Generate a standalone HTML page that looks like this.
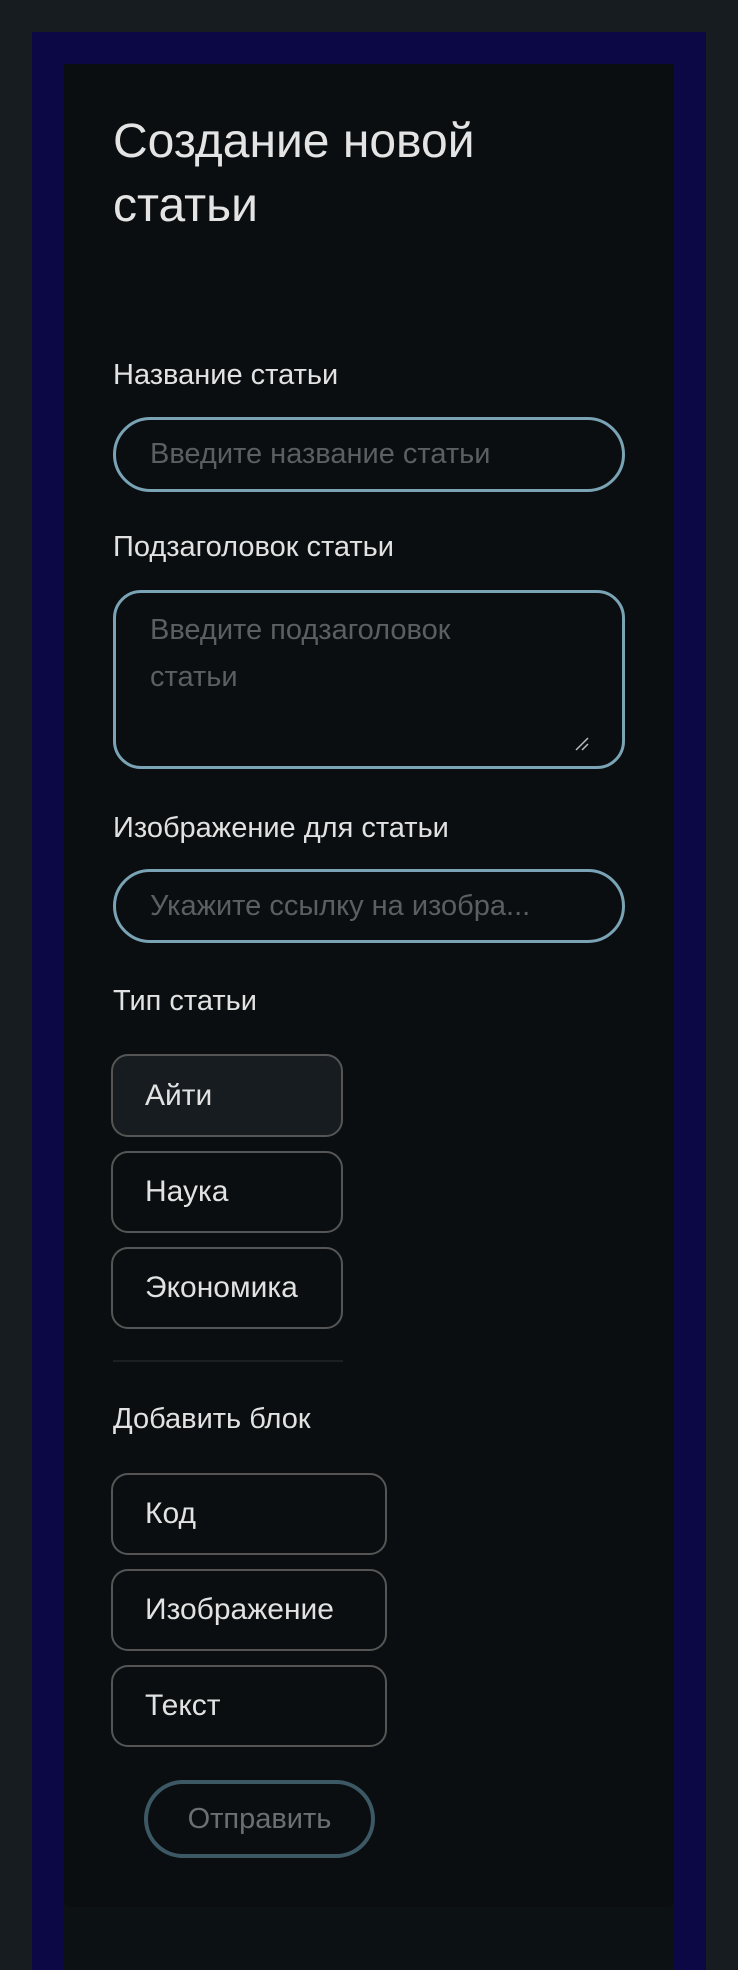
<!DOCTYPE html>
<html><head><meta charset="utf-8"><style>
*{box-sizing:border-box;margin:0;padding:0}
body{width:738px;height:1970px;background:#161c1f;font-family:"Liberation Sans",sans-serif;position:relative;overflow:hidden;color:#e2e2e2}
.blue{position:absolute;left:32px;top:32px;width:674px;height:1938px;background:#0b0845}
.under{position:absolute;left:64px;top:64px;width:610px;height:1906px;background:#0c1114}
.panel{position:absolute;left:64px;top:64px;width:610px;height:1843px;background:#0a0e10;border-radius:0 0 8px 8px}
.a{position:absolute}
.title{left:113px;top:110px;font-size:48px;line-height:64px;color:#e4e4e4;width:440px}
.lbl{left:113px;font-size:29px;color:#e2e2e2;line-height:34px}
.inp{left:113px;width:512px;border:3px solid #7aa3b5;border-radius:40px;font-size:29px;color:#5b5f61;padding-left:34px}
.btn{left:111px;border:2px solid #555;border-radius:17px;font-size:30px;color:#e2e2e2;padding-left:32px;display:flex;align-items:center}
</style></head><body>
<div class="blue"></div><div class="under"></div><div class="panel"></div>
<div class="a title">Создание новой статьи</div>
<div class="a lbl" style="top:358px">Название статьи</div>
<div class="a inp" style="top:417px;height:75px;line-height:69px">Введите название статьи</div>
<div class="a lbl" style="top:530px">Подзаголовок статьи</div>
<div class="a inp" style="top:590px;height:179px;border-radius:28px;line-height:47px;padding-top:14px">Введите подзаголовок<br>статьи</div>
<svg class="a" style="left:574px;top:736px" width="16" height="16"><path d="M2 14L14 2M8 14L14 8" stroke="#bbb" stroke-width="1.5"/></svg>
<div class="a lbl" style="top:811px">Изображение для статьи</div>
<div class="a inp" style="top:869px;height:74px;line-height:68px">Укажите ссылку на изобра...</div>
<div class="a lbl" style="top:984px">Тип статьи</div>
<div class="a btn" style="top:1054px;width:232px;height:83px;background:#161c1f">Айти</div>
<div class="a btn" style="top:1151px;width:232px;height:82px">Наука</div>
<div class="a btn" style="top:1247px;width:232px;height:82px">Экономика</div>
<div class="a" style="left:113px;top:1360px;width:230px;height:2px;background:#1a1f22"></div>
<div class="a lbl" style="top:1402px">Добавить блок</div>
<div class="a btn" style="top:1473px;width:276px;height:82px">Код</div>
<div class="a btn" style="top:1569px;width:276px;height:82px">Изображение</div>
<div class="a btn" style="top:1665px;width:276px;height:82px">Текст</div>
<div class="a" style="left:144px;top:1780px;width:231px;height:78px;border:4px solid #3d5865;border-radius:40px;font-size:29px;color:#6b6f70;text-align:center;line-height:70px">Отправить</div>
</body></html>
